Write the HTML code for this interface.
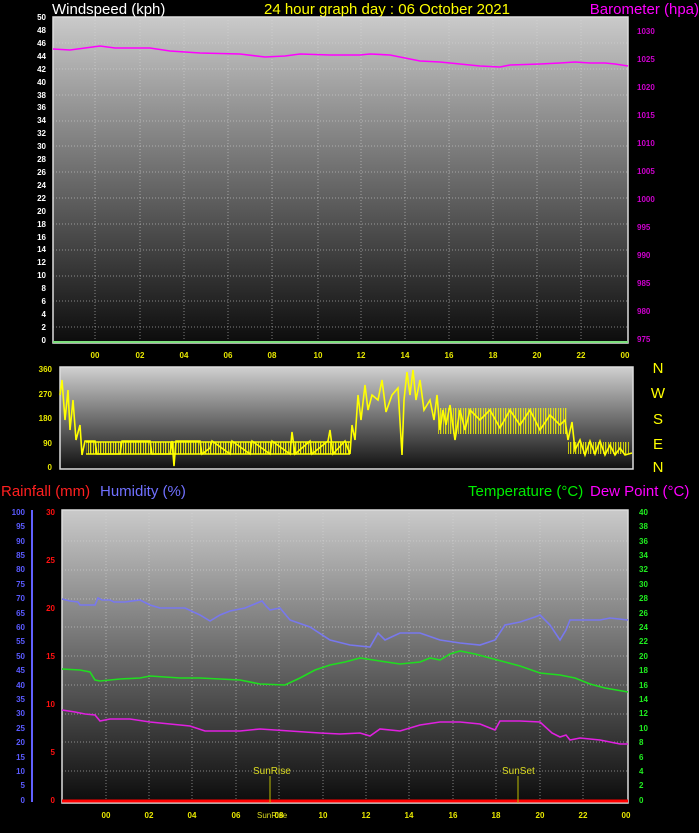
<!DOCTYPE html>
<html><head><meta charset="utf-8"><style>
html,body{margin:0;padding:0;background:#000;width:699px;height:833px;overflow:hidden}
svg{display:block;font-family:"Liberation Sans",sans-serif}
.s{font-size:8px;font-weight:bold}
.g line{stroke:#d8d8d8;stroke-width:1;stroke-dasharray:1,2;opacity:.55}
</style></head><body>
<svg width="699" height="833" viewBox="0 0 699 833">
<defs>
<linearGradient id="bg" x1="0" y1="0" x2="0" y2="1">
<stop offset="0" stop-color="#cacaca"/><stop offset="0.5" stop-color="#6a6a6a"/><stop offset="1" stop-color="#0c0c0c"/></linearGradient>
<linearGradient id="bg2" x1="0" y1="0" x2="0" y2="1">
<stop offset="0" stop-color="#d0d0d0"/><stop offset="0.5" stop-color="#707070"/><stop offset="1" stop-color="#101010"/></linearGradient>
<pattern id="zz" width="5" height="20" patternUnits="userSpaceOnUse">
<rect x="0" y="0" width="1.3" height="20" fill="#ffff00"/><rect x="3" y="0" width="1" height="20" fill="#e8e800"/></pattern>
</defs>
<text x="52" y="14" fill="#fff" font-size="15">Windspeed (kph)</text>
<text x="387" y="14" fill="#ffff00" font-size="15" text-anchor="middle">24 hour graph day : 06 October 2021</text>
<text x="699" y="14" fill="#ff00ff" font-size="15" text-anchor="end">Barometer (hpa)</text>

<rect x="53" y="17" width="575" height="326" fill="url(#bg)"/>
<rect x="53" y="17" width="575" height="326" fill="none" stroke="#ddd" stroke-width="1.5"/>
<g class="g">
<line x1="53" x2="628" y1="43" y2="43"/><line x1="53" x2="628" y1="69" y2="69"/><line x1="53" x2="628" y1="95" y2="95"/><line x1="53" x2="628" y1="121" y2="121"/><line x1="53" x2="628" y1="146" y2="146"/><line x1="53" x2="628" y1="172" y2="172"/><line x1="53" x2="628" y1="198" y2="198"/><line x1="53" x2="628" y1="224" y2="224"/><line x1="53" x2="628" y1="250" y2="250"/><line x1="53" x2="628" y1="276" y2="276"/><line x1="53" x2="628" y1="301" y2="301"/><line x1="53" x2="628" y1="327" y2="327"/>
<line x1="95" x2="95" y1="17" y2="343"/><line x1="140" x2="140" y1="17" y2="343"/><line x1="184" x2="184" y1="17" y2="343"/><line x1="228" x2="228" y1="17" y2="343"/><line x1="272" x2="272" y1="17" y2="343"/><line x1="318" x2="318" y1="17" y2="343"/><line x1="361" x2="361" y1="17" y2="343"/><line x1="405" x2="405" y1="17" y2="343"/><line x1="449" x2="449" y1="17" y2="343"/><line x1="493" x2="493" y1="17" y2="343"/><line x1="537" x2="537" y1="17" y2="343"/><line x1="581" x2="581" y1="17" y2="343"/>
</g>
<line x1="53" x2="628" y1="342" y2="342" stroke="#7de07d" stroke-width="2"/>
<polyline fill="none" stroke="#ff00ff" stroke-width="1.6" points="53,49 70,50 85,48 100,46 115,48 150,48 170,51 200,53 240,54 265,57 285,56 300,54 330,55 360,55 370,54 390,55 405,58 420,61 440,62 460,64 480,66 500,67 510,65 540,64 560,63 575,62 590,63 605,63 615,64 628,66"/>
<g class="s" fill="#fff" text-anchor="end">
<text x="46" y="20">50</text><text x="46" y="33">48</text><text x="46" y="46">46</text><text x="46" y="59">44</text><text x="46" y="72">42</text><text x="46" y="85">40</text><text x="46" y="98">38</text><text x="46" y="110">36</text><text x="46" y="123">34</text><text x="46" y="136">32</text><text x="46" y="149">30</text><text x="46" y="162">28</text><text x="46" y="175">26</text><text x="46" y="188">24</text><text x="46" y="201">22</text><text x="46" y="214">20</text><text x="46" y="227">18</text><text x="46" y="240">16</text><text x="46" y="252">14</text><text x="46" y="265">12</text><text x="46" y="278">10</text><text x="46" y="291">8</text><text x="46" y="304">6</text><text x="46" y="317">4</text><text x="46" y="330">2</text><text x="46" y="343">0</text>
</g>
<g class="s" fill="#cc00cc" font-weight="normal">
<text x="637" y="34">1030</text><text x="637" y="62">1025</text><text x="637" y="90">1020</text><text x="637" y="118">1015</text><text x="637" y="146">1010</text><text x="637" y="174">1005</text><text x="637" y="202">1000</text><text x="637" y="230">995</text><text x="637" y="258">990</text><text x="637" y="286">985</text><text x="637" y="314">980</text><text x="637" y="342">975</text>
</g>
<g class="s" fill="#e8e800" text-anchor="middle">
<text x="95" y="358">00</text><text x="140" y="358">02</text><text x="184" y="358">04</text><text x="228" y="358">06</text><text x="272" y="358">08</text><text x="318" y="358">10</text><text x="361" y="358">12</text><text x="405" y="358">14</text><text x="449" y="358">16</text><text x="493" y="358">18</text><text x="537" y="358">20</text><text x="581" y="358">22</text><text x="625" y="358">00</text>
</g>

<rect x="60" y="367" width="573" height="102" fill="url(#bg2)"/>
<rect x="60" y="367" width="573" height="102" fill="none" stroke="#ddd" stroke-width="1.5"/>
<rect x="86" y="442" width="264" height="12" fill="url(#zz)" opacity="0.9"/>
<rect x="438" y="408" width="130" height="26" fill="url(#zz)" opacity="0.8"/>
<rect x="568" y="442" width="62" height="12" fill="url(#zz)" opacity="0.8"/>
<polyline fill="none" stroke="#ffff00" stroke-width="1.6" points="60,395 62,380 65,420 68,390 70,430 73,400 76,440 80,425 82,455 85,441 95,441 97,454 120,454 122,441 150,441 152,454 170,454 172,441 174,466 176,441 200,441 202,454 210,448 212,441 230,454 232,441 250,454 252,441 270,454 272,441 290,454 292,432 295,454 310,441 312,454 328,441 330,430 333,454 345,441 350,454 352,425 355,440 358,395 361,420 365,385 368,410 372,395 378,400 382,380 386,412 392,395 398,388 402,455 404,400 407,372 410,395 413,370 416,400 420,380 424,410 430,400 434,420 437,395 440,430 443,410 446,425 450,405 455,440 460,410 465,430 470,410 480,420 490,410 500,428 510,410 520,425 530,410 540,430 550,415 560,425 565,420 568,440 572,422 575,450 580,440 585,455 590,441 595,454 600,441 605,455 610,445 615,455 620,448 625,455 632,453"/>
<polyline fill="none" stroke="#ffff00" stroke-width="1.6" points="86,454 350,454"/>
<polyline fill="none" stroke="#ffff00" stroke-width="1.6" points="86,442 350,442"/>
<g class="s" fill="#e8e800" text-anchor="end">
<text x="52" y="372">360</text><text x="52" y="397">270</text><text x="52" y="421">180</text><text x="52" y="446">90</text><text x="52" y="470">0</text>
</g>
<g fill="#ffff00" font-size="15" text-anchor="middle">
<text x="658" y="373">N</text><text x="658" y="398">W</text><text x="658" y="424">S</text><text x="658" y="449">E</text><text x="658" y="472">N</text>
</g>

<text x="1" y="496" fill="#ff2020" font-size="15">Rainfall (mm)</text>
<text x="100" y="496" fill="#7070ff" font-size="15">Humidity (%)</text>
<text x="468" y="496" fill="#00ee00" font-size="15">Temperature (°C)</text>
<text x="590" y="496" fill="#ff00ff" font-size="15">Dew Point (°C)</text>

<rect x="62" y="510" width="566" height="293" fill="url(#bg)"/>
<rect x="62" y="510" width="566" height="293" fill="none" stroke="#ddd" stroke-width="1.5"/>
<g class="g">
<line x1="62" x2="628" y1="541" y2="541"/><line x1="62" x2="628" y1="570" y2="570"/><line x1="62" x2="628" y1="599" y2="599"/><line x1="62" x2="628" y1="627" y2="627"/><line x1="62" x2="628" y1="656" y2="656"/><line x1="62" x2="628" y1="685" y2="685"/><line x1="62" x2="628" y1="714" y2="714"/><line x1="62" x2="628" y1="742" y2="742"/><line x1="62" x2="628" y1="771" y2="771"/>
<line x1="106" x2="106" y1="510" y2="803"/><line x1="149" x2="149" y1="510" y2="803"/><line x1="192" x2="192" y1="510" y2="803"/><line x1="236" x2="236" y1="510" y2="803"/><line x1="279" x2="279" y1="510" y2="803"/><line x1="323" x2="323" y1="510" y2="803"/><line x1="366" x2="366" y1="510" y2="803"/><line x1="409" x2="409" y1="510" y2="803"/><line x1="453" x2="453" y1="510" y2="803"/><line x1="496" x2="496" y1="510" y2="803"/><line x1="540" x2="540" y1="510" y2="803"/><line x1="583" x2="583" y1="510" y2="803"/>
</g>
<polyline fill="none" stroke="#7878ee" stroke-width="1.6" points="62,599 70,601 78,602 80,605 95,605 98,598 102,600 110,600 114,602 125,602 140,600 150,605 160,608 185,608 200,615 210,621 220,615 230,611 245,608 262,601 266,606 270,610 280,608 290,620 310,627 330,640 350,645 370,647 378,633 385,640 400,633 420,633 440,640 460,643 480,645 495,640 505,625 520,622 535,617 540,615 550,625 560,640 566,630 570,620 580,620 600,620 610,618 628,620"/>
<polyline fill="none" stroke="#20dd20" stroke-width="1.6" points="62,669 80,670 90,672 95,680 100,681 120,679 140,678 150,676 180,678 200,678 220,679 240,680 260,684 285,685 300,678 315,670 330,665 345,662 360,658 380,661 400,664 420,662 430,658 440,660 450,654 460,651 475,654 490,658 505,662 520,666 540,673 560,675 575,678 590,684 605,688 628,692"/>
<polyline fill="none" stroke="#e020e0" stroke-width="1.6" points="62,710 75,712 85,714 95,715 100,721 110,719 130,719 150,722 170,724 190,726 205,731 240,731 260,729 290,731 320,733 340,734 360,733 370,736 380,729 400,731 420,725 440,722 460,722 480,724 495,730 500,721 520,721 540,722 552,733 560,737 566,735 570,740 580,738 600,740 610,742 620,744 628,744"/>
<line x1="62" x2="628" y1="801" y2="801" stroke="#ff0000" stroke-width="3"/>
<line x1="270" x2="270" y1="776" y2="803" stroke="#bbbb00" stroke-width="1"/>
<line x1="518" x2="518" y1="776" y2="803" stroke="#bbbb00" stroke-width="1"/>
<text x="253" y="774" fill="#dddd20" font-size="10">SunRise</text>
<text x="502" y="774" fill="#dddd20" font-size="10">SunSet</text>
<text x="257" y="818" fill="#dddd20" font-size="8">SunRise</text>
<line x1="32" x2="32" y1="510" y2="802" stroke="#6060ff" stroke-width="2"/>
<g class="s" fill="#5a5aff" text-anchor="end" font-weight="normal">
<text x="25" y="515">100</text><text x="25" y="529">95</text><text x="25" y="544">90</text><text x="25" y="558">85</text><text x="25" y="572">80</text><text x="25" y="587">75</text><text x="25" y="601">70</text><text x="25" y="616">65</text><text x="25" y="630">60</text><text x="25" y="644">55</text><text x="25" y="659">50</text><text x="25" y="673">45</text><text x="25" y="688">40</text><text x="25" y="702">35</text><text x="25" y="716">30</text><text x="25" y="731">25</text><text x="25" y="745">20</text><text x="25" y="760">15</text><text x="25" y="774">10</text><text x="25" y="788">5</text><text x="25" y="803">0</text>
</g>
<g class="s" fill="#ff1010" text-anchor="end" font-weight="normal">
<text x="55" y="515">30</text><text x="55" y="563">25</text><text x="55" y="611">20</text><text x="55" y="659">15</text><text x="55" y="707">10</text><text x="55" y="755">5</text><text x="55" y="803">0</text>
</g>
<g class="s" fill="#20ee20">
<text x="639" y="515">40</text><text x="639" y="529">38</text><text x="639" y="544">36</text><text x="639" y="558">34</text><text x="639" y="572">32</text><text x="639" y="587">30</text><text x="639" y="601">28</text><text x="639" y="616">26</text><text x="639" y="630">24</text><text x="639" y="644">22</text><text x="639" y="659">20</text><text x="639" y="673">18</text><text x="639" y="688">16</text><text x="639" y="702">14</text><text x="639" y="716">12</text><text x="639" y="731">10</text><text x="639" y="745">8</text><text x="639" y="760">6</text><text x="639" y="774">4</text><text x="639" y="788">2</text><text x="639" y="803">0</text>
</g>
<g class="s" fill="#e8e800" text-anchor="middle">
<text x="106" y="818">00</text><text x="149" y="818">02</text><text x="192" y="818">04</text><text x="236" y="818">06</text><text x="279" y="818">08</text><text x="323" y="818">10</text><text x="366" y="818">12</text><text x="409" y="818">14</text><text x="453" y="818">16</text><text x="496" y="818">18</text><text x="540" y="818">20</text><text x="583" y="818">22</text><text x="626" y="818">00</text>
</g>
</svg>
</body></html>
